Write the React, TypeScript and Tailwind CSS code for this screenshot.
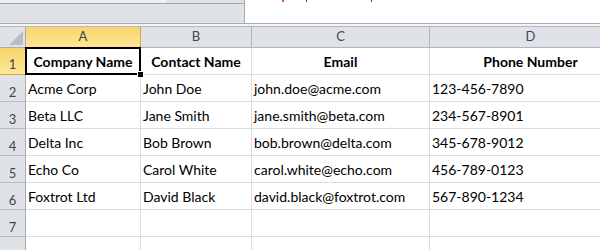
import React from "react";

const cols = ["A", "B", "C", "D"];

const rows: { num: string; cells: string[] }[] = [
  { num: "2", cells: ["Acme Corp", "John Doe", "john.doe@acme.com", "123-456-7890"] },
  { num: "3", cells: ["Beta LLC", "Jane Smith", "jane.smith@beta.com", "234-567-8901"] },
  { num: "4", cells: ["Delta Inc", "Bob Brown", "bob.brown@delta.com", "345-678-9012"] },
  { num: "5", cells: ["Echo Co", "Carol White", "carol.white@echo.com", "456-789-0123"] },
  { num: "6", cells: ["Foxtrot Ltd", "David Black", "david.black@foxtrot.com", "567-890-1234"] },
  { num: "7", cells: ["", "", "", ""] },
  { num: "", cells: ["", "", "", ""] },
];

const headers = ["Company Name", "Contact Name", "Email", "Phone Number"];

const font = { fontFamily: "Lato, 'Open Sans', sans-serif" };

export default function App() {
  return (
    <div className="relative w-[600px] h-[250px] overflow-hidden bg-white" style={font}>
      {/* formula bar strip */}
      <div className="flex h-[23px]">
        <div className="w-[245px] flex flex-col bg-[#dfe3e8] border-r border-[#a5a9ae]">
          <div className="flex h-[3px]">
            <div className="w-[167px] bg-[#eef0f2] rounded-br-[5px]" />
          </div>
          <div className="h-px bg-[#a3a7ac]" />
          <div className="flex-1" />
        </div>
        <div className="flex-1 bg-white" />
      </div>
      <div className="h-px bg-[#a9acb1]" />
      <div className="h-[2px] bg-[#f3f4f6]" />
      <div className="h-px bg-[#b4b7bc]" />

      {/* sheet grid */}
      <div className="grid grid-cols-[26px_115px_111px_178px_202px] grid-rows-[21px_27px_27px_27px_27px_27px_27px_27px_27px] w-[632px]">
        <div className="relative bg-[#dfe3e8] border-r border-b border-[#a9adb2]">
          <svg className="absolute right-[2px] bottom-[2px]" width="14" height="14" viewBox="0 0 14 14">
            <polygon points="14,0 14,14 0,14" fill="#b9bdc3" />
          </svg>
        </div>
        {cols.map((c, i) => (
          <div
            key={c}
            className={
              i === 0
                ? "flex items-center justify-center text-[13px] text-[#3f4650] bg-gradient-to-b from-[#f8d46c] to-[#ffe794] border-r border-b border-[#e2a33c]"
                : "flex items-center justify-center text-[13px] text-[#3f4650] bg-[#dfe3e8] border-r border-b border-[#b0b4b9]"
            }
          >
            {c}
          </div>
        ))}

        <div className="flex items-end justify-center text-[13px] text-[#3f4650] bg-gradient-to-b from-[#f8d46c] to-[#ffe794] border-r border-b border-[#e2a33c]">
          1
        </div>
        {headers.map((h) => (
          <div
            key={h}
            className="flex items-end justify-center pb-[2px] text-[14px] font-bold text-black border-r border-b border-[#dadcdd]"
          >
            {h}
          </div>
        ))}

        {rows.map((r, ri) => (
          <React.Fragment key={ri}>
            <div className="flex items-end justify-center pb-px text-[13px] leading-[16px] text-[#3f4650] bg-[#dfe3e8] border-r border-b border-r-[#a9adb2] border-b-[#b8bcc1]">
              <span>{r.num}</span>
            </div>
            {r.cells.map((v, ci) => (
              <div
                key={ci}
                className="flex items-end pl-[2px] pb-[2px] text-[14px] text-black whitespace-nowrap overflow-hidden border-r border-b border-[#dadcdd]"
              >
                {v}
              </div>
            ))}
          </React.Fragment>
        ))}
      </div>

      {/* active cell A1 */}
      <div className="absolute left-[25px] top-[47px] w-[116px] h-[28px] border-2 border-black" />
      <div className="absolute left-[137px] top-[71px] w-[7px] h-[7px] bg-black border border-white" />

      {/* clipped red text fragments in formula bar */}
      <div className="absolute left-[282px] top-0 w-[2px] h-[2px] bg-[#d9531e]" />
      <div className="absolute left-[306px] top-0 w-px h-[2px] bg-[#c0202a]" />
      <div className="absolute left-[371px] top-0 w-px h-[2px] bg-[#c0202a]" />
    </div>
  );
}
